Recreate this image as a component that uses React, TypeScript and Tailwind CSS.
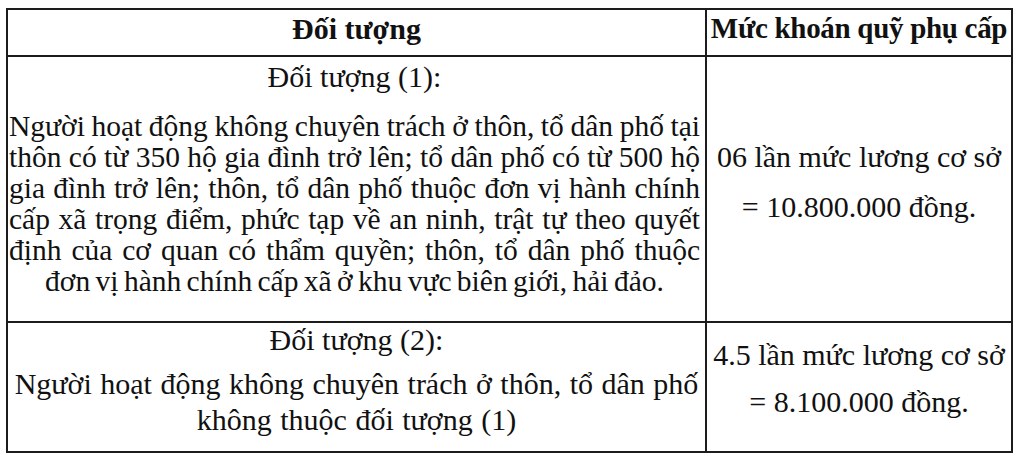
const serif = "font-['Liberation_Serif','Times_New_Roman',serif]";

const group1 = [
  'Người hoạt động không chuyên trách ở thôn, tổ dân phố tại',
  'thôn có từ 350 hộ gia đình trở lên; tổ dân phố có từ 500 hộ',
  'gia đình trở lên; thôn, tổ dân phố thuộc đơn vị hành chính',
  'cấp xã trọng điểm, phức tạp về an ninh, trật tự theo quyết',
  'định của cơ quan có thẩm quyền; thôn, tổ dân phố thuộc',
];

export default function App() {
  return (
    <div className={`w-[1020px] h-[464px] bg-white text-[#111] ${serif} overflow-hidden`}>
      <div className="ml-[6px] mt-[8px] w-[1007px] border-2 border-[#1c1c1c]">
        {/* header */}
        <div className="flex border-b-2 border-[#1c1c1c] h-[47px] pt-[3px] font-bold text-[30px] leading-[31px]">
          <div className="w-[699px] -mt-[3px] pt-[3px] border-r-2 border-[#1c1c1c] text-center">Đối tượng</div>
          <div className="flex-1 text-center whitespace-nowrap text-[29px] tracking-[-0.3px]">Mức khoán quỹ phụ cấp</div>
        </div>

        {/* row 1 */}
        <div className="flex border-b-2 border-[#1c1c1c] h-[266px] text-[30px] leading-[31px]">
          <div className="w-[699px] border-r-2 border-[#1c1c1c] pt-[4px] pr-[5px] pl-[1px]">
            <p className="text-center">Đối tượng (1):</p>
            <div className="mt-[19px] text-[29.5px] [word-spacing:-2px]">
              {group1.map((line) => (
                <div key={line} className="whitespace-nowrap text-justify [text-align-last:justify]">
                  {line}
                </div>
              ))}
              <div className="text-center whitespace-nowrap">đơn vị hành chính cấp xã ở khu vực biên giới, hải đảo.</div>
            </div>
          </div>
          <div className="flex-1 flex flex-col items-center pt-[84px] gap-[19px]">
            <p>06 lần mức lương cơ sở</p>
            <p>= 10.800.000 đồng.</p>
          </div>
        </div>

        {/* row 2 */}
        <div className="flex h-[128px] text-[30px] leading-[31px]">
          <div className="w-[699px] border-r-2 border-[#1c1c1c] pt-[1px] text-center">
            <p>Đối tượng (2):</p>
            <p className="mt-[11px] leading-[36px] [word-spacing:1px]">
              Người hoạt động không chuyên trách ở thôn, tổ dân phố
              <br />
              không thuộc đối tượng (1)
            </p>
          </div>
          <div className="flex-1 flex flex-col items-center pt-[16px] gap-[16px]">
            <p>4.5 lần mức lương cơ sở</p>
            <p>= 8.100.000 đồng.</p>
          </div>
        </div>
      </div>
    </div>
  );
}
